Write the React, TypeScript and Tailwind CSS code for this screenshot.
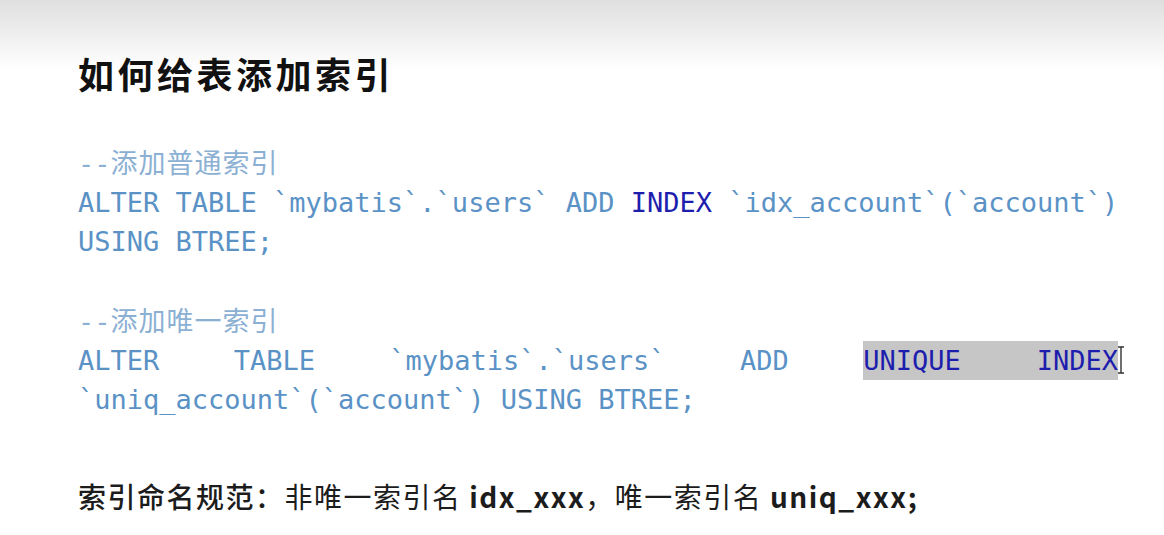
const mono = "font-['DejaVu_Sans_Mono','Liberation_Mono',monospace]";
const cjk = "font-['Noto_Sans_CJK_SC','Noto_Sans',sans-serif]";

const Cursor = () => (
  <svg width="8" height="28" viewBox="0 0 8 28" className="absolute -right-[7px] top-[5px]">
    <path d="M1 1h6M4 1v26M1 27h6" stroke="#333" strokeWidth="1.4" fill="none" />
  </svg>
);

const App = () => {
  return (
    <div className="w-[1164px] h-[535px] overflow-hidden bg-linear-to-b from-[#dfdfdf] via-white via-[13%] to-white pl-[78px]">
      <h1 className={`${cjk} pt-[53px] text-[36px] leading-[40px] font-bold tracking-[3.5px] text-[#111]`}>
        如何给表添加索引
      </h1>

      <div className={`${mono} mt-[49px] w-[1040px] text-[27px] leading-[39px] text-[#5a92c6] whitespace-pre`}>
        <div className="text-[#8bb0d3]">
          --<span className={`${cjk} tracking-[1px]`}>添加普通索引</span>
        </div>
        <div>
          ALTER TABLE `mybatis`.`users` ADD <span className="text-[#1e1eae]">INDEX</span> `idx_account`(`account`)
        </div>
        <div>USING BTREE;</div>
        <div>&nbsp;</div>
        <div className="text-[#8bb0d3]">
          --<span className={`${cjk} tracking-[1px]`}>添加唯一索引</span>
        </div>
        <div className="flex justify-between">
          <span>ALTER</span>
          <span>TABLE</span>
          <span>`mybatis`.`users`</span>
          <span>ADD</span>
          <span className="relative flex gap-[76px] bg-[#c6c6c6] text-[#1e1eae]">
            <span>UNIQUE</span>
            <span>INDEX</span>
            <Cursor />
          </span>
        </div>
        <div>`uniq_account`(`account`) USING BTREE;</div>
      </div>

      <p className={`${cjk} mt-[59px] text-[28px] leading-[36px] tracking-[1.5px] text-[#1c1c1c]`}>
        <span className="font-medium">索引命名规范：</span>
        非唯一索引名 <span className="font-bold">idx_xxx</span>，唯一索引名{" "}
        <span className="font-bold">uniq_xxx;</span>
      </p>
    </div>
  );
};

export default App;
